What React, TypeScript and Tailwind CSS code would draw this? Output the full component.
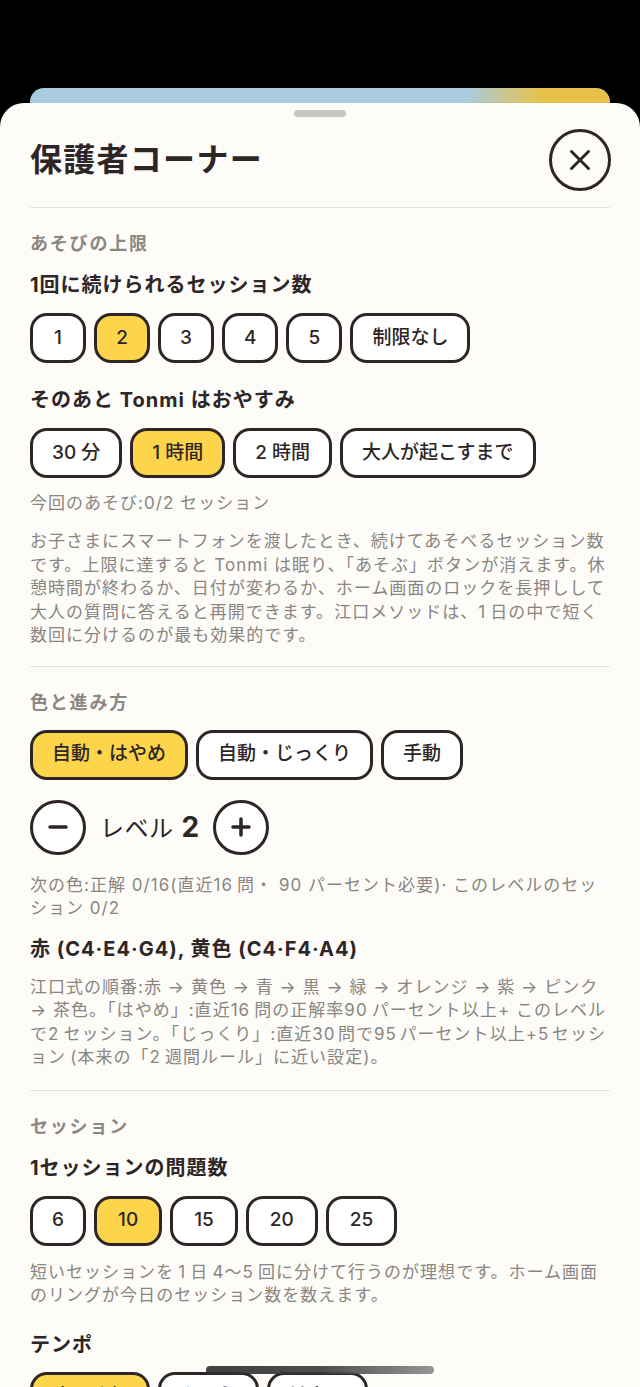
import React from "react";

const ink = "#2e2626";
const t = "\u2009";

function Chip({ label, selected = false, pad = "px-[19px]" }: { label: string; selected?: boolean; pad?: string }) {
  return (
    <div
      className={
        "flex h-[50px] min-w-[56px] items-center justify-center rounded-[17px] border-[3px] border-[#2e2626] text-[19px] font-medium text-[#2e2626] " +
        (label.length === 1 ? "px-[19px]" : pad) +
        " " +
        (selected ? "bg-[#fdd54b]" : "bg-white")
      }
    >
      {label}
    </div>
  );
}

function ChipRow({
  items,
  selected,
  className = "",
  pad,
}: {
  items: string[];
  selected: number;
  className?: string;
  pad?: string;
}) {
  return (
    <div className={"flex gap-[8px] " + className}>
      {items.map((it, i) => (
        <Chip key={it} label={it} selected={i === selected} pad={pad} />
      ))}
    </div>
  );
}

function Label({ children, className = "" }: { children: React.ReactNode; className?: string }) {
  return (
    <div className={"text-[18px] font-semibold leading-[24px] tracking-[0.1em] text-[#8d8782] " + className}>
      {children}
    </div>
  );
}

function Heading({ children, className = "" }: { children: React.ReactNode; className?: string }) {
  return (
    <div className={"text-[20px] font-bold leading-[28px] tracking-[0.05em] text-[#2e2626] " + className}>
      {children}
    </div>
  );
}

function Para({ children, className = "" }: { children: React.ReactNode; className?: string }) {
  return (
    <p className={"text-[17px] leading-[23.5px] tracking-[0.06em] text-[#8a8580] " + className}>{children}</p>
  );
}

export default function App() {
  return (
    <div className="relative h-[1387px] w-[640px] overflow-hidden bg-black font-[Inter,'Noto_Sans_CJK_JP',sans-serif]">
      <div className="h-[88px]" />
      <div className="mx-[30px] h-[15px] rounded-t-[14px] bg-[linear-gradient(90deg,#a8cbe0_0%,#a8cbe0_75%,#e6c24c_88%,#e8c04a_100%)]" />
      <div className="rounded-t-[24px] bg-[#fdfcf9] pb-[40px]">
        <div className="pt-[7px]">
          <div className="mx-auto h-[7px] w-[52px] rounded-full bg-[#c8c7c5]" />
        </div>
        <div className="mt-[12px] flex items-center justify-between pl-[30px] pr-[29px]">
          <h1 className="text-[32px] font-bold tracking-[0.04em] text-[#2e2626]">保護者コーナー</h1>
          <button className="flex h-[62px] w-[62px] items-center justify-center rounded-full border-[3px] border-[#2e2626]">
            <svg width="24" height="24" viewBox="0 0 24 24" fill="none" stroke={ink} strokeWidth="3" strokeLinecap="round">
              <path d="M3.5 3.5 L20.5 20.5 M20.5 3.5 L3.5 20.5" />
            </svg>
          </button>
        </div>
        <div className="mx-[30px] mt-[16px] h-px bg-[#e6e3de]" />

        <div className="px-[30px]">
          <Label className="mt-[24px]">あそびの上限</Label>
          <Heading className="mt-[15px]">1回に続けられるセッション数</Heading>
          <ChipRow className="mt-[14px]" items={["1", "2", "3", "4", "5", "制限なし"]} selected={1} />
          <Heading className="mt-[23px]">そのあと Tonmi はおやすみ</Heading>
          <ChipRow className="mt-[14px]" items={["30 分", "1 時間", "2 時間", "大人が起こすまで"]} selected={1} />
          <Para className="mt-[13px] leading-[24px]">今回のあそび:0/2 セッション</Para>
          <Para className="mt-[15px]">
            {`お子さまにスマートフォンを渡したとき、続けてあそべるセッション数です。上限に達すると Tonmi は眠り、「あそぶ」ボタンが消えます。休憩時間が終わるか、日付が変わるか、ホーム画面のロックを長押しして大人の質問に答えると再開できます。江口メソッドは、1${t}日の中で短く数回に分けるのが最も効果的です。`}
          </Para>
        </div>
        <div className="mx-[30px] mt-[18px] h-px bg-[#e6e3de]" />

        <div className="px-[30px]">
          <Label className="mt-[24px]">色と進み方</Label>
          <ChipRow className="mt-[15px]" items={["自動・はやめ", "自動・じっくり", "手動"]} selected={0} />
          <div className="mt-[20px] flex items-center gap-[14px]">
            <button className="flex h-[55px] w-[56px] items-center justify-center rounded-full border-[3px] border-[#2e2626] bg-white">
              <svg width="22" height="22" viewBox="0 0 22 22" fill="none" stroke={ink} strokeWidth="3.5" strokeLinecap="round">
                <path d="M3 11 H19" />
              </svg>
            </button>
            <div className="flex items-baseline gap-[8px] text-[#2e2626]">
              <span className="text-[24px] tracking-[0.02em]">レベル</span>
              <span className="text-[28px] font-bold">2</span>
            </div>
            <button className="flex h-[55px] w-[56px] items-center justify-center rounded-full border-[3px] border-[#2e2626] bg-white">
              <svg width="22" height="22" viewBox="0 0 22 22" fill="none" stroke={ink} strokeWidth="3.5" strokeLinecap="round">
                <path d="M3 11 H19 M11 3 V19" />
              </svg>
            </button>
          </div>
          <Para className="mt-[19px]">{`次の色:正解 0/16(直近16${t}問・ 90 パーセント必要)· このレベルのセッション 0/2`}</Para>
          <Heading className="mt-[14px] tracking-[0.01em]">赤 (C4·E4·G4), 黄色 (C4·F4·A4)</Heading>
          <Para className="mt-[13px] [line-break:loose]">
            {`江口式の順番:赤 → 黄色 → 青 → 黒 → 緑 → オレンジ → 紫 → ピンク → 茶色。「はやめ」:直近16${t}問の正解率90${t}パーセント以上+ このレベルで2${t}セッション。「じっくり」:直近30\u200A問で95\u200Aパーセント以上+5\u200Aセッション${t}(本来の「2${t}週間ルール」に近い設定)。`}
          </Para>
        </div>
        <div className="mx-[30px] mt-[20px] h-px bg-[#e6e3de]" />

        <div className="px-[30px]">
          <Label className="mt-[24px]">セッション</Label>
          <Heading className="mt-[15px]">1セッションの問題数</Heading>
          <ChipRow className="mt-[14px]" items={["6", "10", "15", "20", "25"]} selected={1} pad="px-[21px]" />
          <Para className="mt-[15px]">
            {`短いセッションを${t}1${t}日${t}4～5${t}回に分けて行うのが理想です。ホーム画面のリングが今日のセッション数を数えます。`}
          </Para>
          <Heading className="mt-[23px]">テンポ</Heading>
          <ChipRow className="mt-[13px]" items={["ゆっくり", "ふつう", "はやい"]} selected={0} />
        </div>
      </div>

      <div className="absolute left-[206px] top-[1366px] h-[8px] w-[228px] rounded-full bg-[linear-gradient(90deg,#2b2b2b_0%,#3a3a3a_50%,#8a8a8a_100%)] opacity-90" />
    </div>
  );
}
